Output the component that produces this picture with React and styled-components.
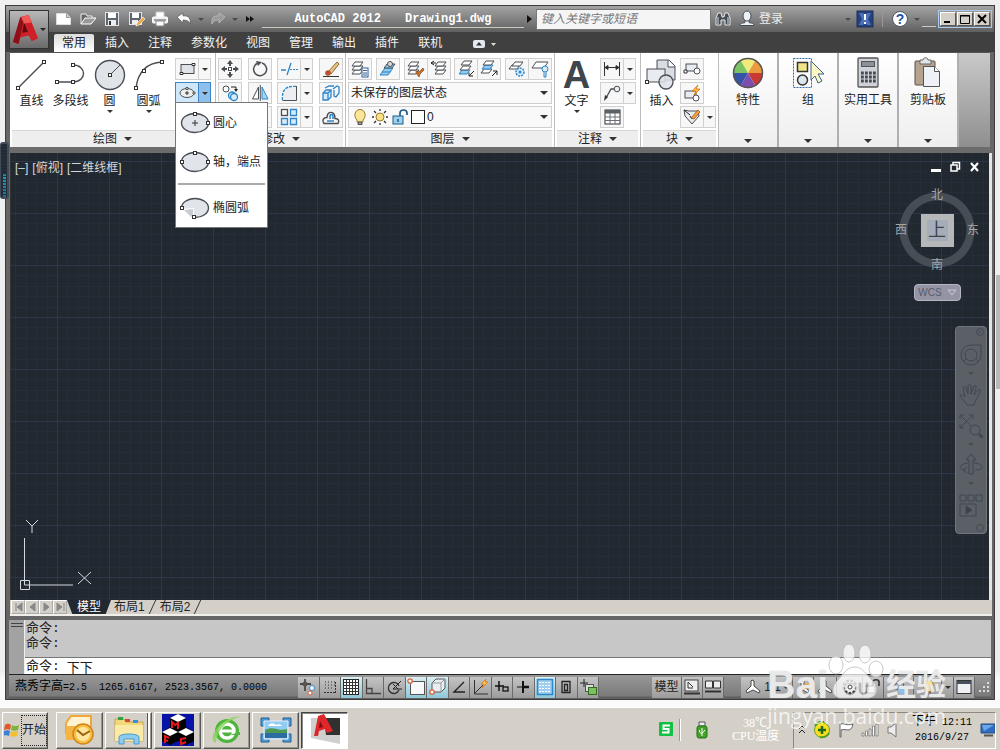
import { useState } from 'react';
import styled, { createGlobalStyle, css } from 'styled-components';

const line = '#4a4f55';
const blue = '#2f86c8';

const box = (x, y, key) => (
  <rect key={key} x={x - 1.5} y={y - 1.5} width="3" height="3" fill="#fff" stroke="#333" />
);

const sheet = (x, y, fill = '#fff', stroke = line) => (
  <path d={`M${x} ${y + 4}l3-4h8l-3 4z`} fill={fill} stroke={stroke} />
);

const sheets = (x = 1) => (
  <g>
    {sheet(x, 10)}
    {sheet(x, 6)}
    {sheet(x, 2)}
  </g>
);

const glyphs = {
  // quick access
  newFile: <><path d="M1.500 3.500h10l4 4v7h-14z" fill="#fff" stroke="#ddd" /><path d="M11.500 3.500v4h4" fill="#ccc" stroke="#999" /></>,
  open: <><path d="M2 14V4h5l1 2h5v3" fill="#666" stroke="#eee" /><path d="M2 14l4-6h11l-5 6z" fill="#999" stroke="#fff" /></>,
  save: <><rect x="2.500" y="2.500" width="13" height="13" fill="#5c6670" stroke="#dfe5ea" /><rect x="5" y="3" width="8" height="5" fill="#fff" /><rect x="5" y="10" width="8" height="5" fill="#eee" /><path d="M6 11h2v4H6z" fill="#333" /></>,
  saveAs: <><rect x="2.500" y="2.500" width="12" height="12" fill="#5c6670" stroke="#dfe5ea" /><rect x="5" y="3" width="7" height="5" fill="#fff" /><rect x="5" y="10" width="6" height="4" fill="#eee" /><path d="M9 16l1-3 6-6 2 2-6 6z" fill="#f0a63c" stroke="#fff" strokeWidth=".6" /></>,
  print: <><path d="M5 7V2h8v5" fill="#fff" stroke="#ccc" /><rect x="1.500" y="7" width="15" height="6" rx="1" fill="#eee" stroke="#fff" /><path d="M3 10h12" stroke="#555" /><path d="M5 11h8v5H5z" fill="#fff" stroke="#888" /></>,
  undo: <path d="M2 7l6-4v3c6-1 8 3 7 8-1-3-3-4-7-4v3z" fill="#fff" stroke="#555" strokeWidth=".7" />,
  redo: <path d="M16 7l-6-4v3c-6-1-8 3-7 8 1-3 3-4 7-4v3z" fill="#9b9b9b" stroke="#c2c2c2" strokeWidth=".7" />,
  binoculars: <><path d="M2 15V8l2-5h3l1 4h2l1-4h3l2 5v7h-5v-5H7v5z" fill="#454d57" stroke="#e8e8e8" /><path d="M4 7v7M14 7v7" stroke="#dde" /></>,
  user: <><path d="M2 15.500c0-3 3-2 5-3v-3h4v3c2 1 5 0 5 3z" fill="#eef1f5" stroke="#454d57" /><ellipse cx="9" cy="6" rx="4" ry="5" fill="#eef1f5" stroke="#454d57" /></>,
  exchange: <><rect x="1" y="1" width="16" height="16" fill="#24427f" stroke="#1f2f52" /><path d="M3 3h4l2 3 2-3h4l-3 6 3 6h-4l-2-3-2 3H3l3-6z" fill="#4c70b6" /><path d="M9 4v6M9 12v2" stroke="#fff" strokeWidth="2" /></>,
  // draw panel, 34x34
  line: <><path d="M3 30L29 4" stroke={line} strokeWidth="1.400" />{box(3, 30)}{box(29, 4)}</>,
  polyline: <><path d="M3 24h16c14 0 14-17 0-17" fill="none" stroke={line} strokeWidth="1.400" />{box(3, 24)}{box(19, 24)}{box(19, 7)}</>,
  circle: <><circle cx="17" cy="17" r="14.500" fill="#e0e3e8" stroke={line} strokeWidth="1.400" /><path d="M17 17L27 7" stroke={line} />{box(17, 17)}</>,
  arc: <><path d="M4 30C6 14 14 5 30 4" fill="none" stroke={line} strokeWidth="1.400" />{box(4, 30)}{box(12, 13)}{box(30, 4)}</>,
  rect: <><rect x="3" y="4.500" width="13" height="9" fill="#dfe3e8" stroke={line} /><path d="M2 12.500h3v2H2zM14 3.500h3v2h-3z" fill="#fff" stroke="#333" /></>,
  ellipse: <><ellipse cx="9" cy="9" rx="7" ry="4.500" fill="#eee" stroke={line} /><path d="M9 7v4M7 9h4" stroke="#333" /><path d="M8 3.500h2v2H8zM15 8h2v2h-2z" fill="#fff" stroke="#333" strokeWidth=".8" /></>,
  // modify panel
  move: <><path d="M9 1v5M9 12v5M1 9h5M12 9h5" stroke={line} strokeWidth="2" /><path d="M6 4l3-4 3 4zM6 14l3 4 3-4zM4 6L0 9l4 3zM14 6l4 3-4 3z" fill={line} /><rect x="7.500" y="7.500" width="3" height="3" fill="#fff" stroke={line} /></>,
  rotate: <><path d="M6 3.500A6.500 6.500 0 1 0 11 3" fill="none" stroke={line} strokeWidth="1.500" /><path d="M5 1l6 1-4 4z" fill={line} /></>,
  trim: <><path d="M1 10h5M11 3l-4 12" stroke={blue} strokeWidth="1.300" /><path d="M10 9.500h8" stroke={blue} strokeDasharray="2 1" /></>,
  erase: <><path d="M6 12L15 2l2 2L9 14z" fill="#e5c485" stroke="#8d6a35" /><circle cx="6" cy="13" r="2.800" fill="#b9502d" /><path d="M1 16.500h16" stroke="#333" /></>,
  copy: <><circle cx="5" cy="5" r="3" fill="#fff" stroke={line} /><circle cx="11" cy="11.500" r="3.500" fill="#d7ecfa" stroke={blue} strokeWidth="1.300" /><circle cx="13" cy="13" r="3.500" fill="#d7ecfa" stroke={blue} strokeWidth="1.300" /><path d="M10 3h5v3" fill="none" stroke="#222" /><path d="M13 5h4l-2 3z" fill="#222" /></>,
  mirror: <><path d="M7.500 3v12H1.500z" fill="#fff" stroke={line} /><path d="M11 3v12h6z" fill="#a9d4f2" stroke={blue} /><path d="M9.300 1v16" stroke={line} /></>,
  fillet: <><path d="M2.500 16V13C2.500 6 6 2.500 13 2.500h3" fill="none" stroke={blue} strokeWidth="1.500" strokeDasharray="3 1" /><path d="M2.500 16.500h14V2" fill="none" stroke={line} /><path d="M3 16C3 7 7 3 16 3v13z" fill="#eceef1" /></>,
  explode: <><path d="M1 9l3-3h5v7l-3 3H1z" fill="#d7ecfa" stroke={blue} strokeWidth="1.300" /><path d="M1 9h5v7M6 9l3-3M11 5l4-3 2 1v6l-3 4-2-1V6M3 4l4-2h5" fill="none" stroke={blue} strokeWidth="1.300" /></>,
  array: <><rect x="1.500" y="1.500" width="6" height="6" fill="none" stroke={line} strokeWidth="1.300" /><path d="M10.500 1.500h6v6h-6zM1.500 10.500h6v6h-6zM10.500 10.500h6v6h-6z" fill="#d7ecfa" stroke={blue} strokeWidth="1.300" /></>,
  offset: <><path d="M2 15.500h14c2-4-1-5-3-5 0-8-8-8-8-1-4 0-5 3-3 6z" fill="none" stroke={line} strokeWidth="1.400" /><path d="M5 13h7M8 11V8c0-2 3-2 3 0v3" fill="none" stroke={blue} strokeWidth="1.600" /></>,
  // layer panel
  layerProps: <>{sheets(1)}<rect x="11" y="8" width="6" height="9" fill="#fff" stroke="#345f95" /><path d="M12 10.500h4M12 13h4M12 15h4" stroke="#345f95" /></>,
  layerCurrent: <>{sheet(1, 11, '#8fcaf0', blue)}{sheet(3, 8, '#8fcaf0', blue)}{sheet(5, 4, '#8fcaf0', line)}<circle cx="11" cy="4" r="2.500" fill="#ddd" stroke={line} /></>,
  layerMatch: <>{sheets(1)}<path d="M9 11l3 1 4-4 1 2-4 4-1 3-3-4z" fill="#c5712b" stroke="#8b4a1b" strokeWidth=".7" /></>,
  layerPrev: <>{sheets(5)}<path d="M1 3h5M1 3l3-2M1 3l3 2" stroke="#222" fill="none" /></>,
  isolate: <>{sheet(2, 10, '#8fcaf0', blue)}{sheet(3, 6)}{sheet(4, 1)}<path d="M17 11l-5 5M12 12.500V16h4" fill="none" stroke="#222" /></>,
  unisolate: <>{sheet(1, 9)}{sheet(2, 5, '#8fcaf0', blue)}{sheet(3, 1)}<path d="M12 16l5-5M13 11h4v4" fill="none" stroke="#222" /></>,
  freeze: <>{sheet(1, 5)}{sheet(4, 2)}<circle cx="12" cy="12" r="4" fill="#d7ecfa" stroke={blue} strokeWidth="1.500" strokeDasharray="2 1" /><circle cx="12" cy="12" r="1.500" fill={blue} /></>,
  layerOff: <><path d="M1 8l4-6h12l-4 6z" fill="#fff" stroke={line} /><circle cx="14" cy="9" r="3" fill="#d7ecfa" stroke={blue} /><path d="M13 12v5h2v-5" fill="#d7ecfa" stroke={blue} /></>,
  bulb: <><path d="M6 12C2 8 4 1.500 9 1.500S16 8 12 12v2H6z" fill="#fbe596" stroke="#9a7b32" /><path d="M7 14h4v2.500H7z" fill="#999" stroke="#555" /></>,
  sun: <><circle cx="9" cy="9" r="4" fill="#fbdf83" stroke="#9a7b32" /><path d="M9 1v2M9 15v2M1 9h2M15 9h2M3 3l2 2M13 13l2 2M15 3l-2 2M5 13l-2 2" stroke="#333" strokeWidth="1.300" /></>,
  unlock: <><rect x="2" y="8" width="10" height="8" fill="#9bd0ef" stroke="#1f5d87" /><path d="M9 8V5c0-4 7-4 7 0v2" fill="none" stroke="#1f5d87" strokeWidth="1.700" /><path d="M7 11v3" stroke="#1f5d87" strokeWidth="1.500" /></>,
  // annotation and block
  dimension: <path d="M1.500 2v14M16.500 2v14M2 7.500h14M2 7.500l3-2v4zM16 7.500l-3-2v4z" fill="#333" stroke="#333" />,
  leader: <><circle cx="14" cy="5" r="2.800" fill="#eee" stroke={line} /><path d="M11 5H8L3 14" fill="none" stroke={line} strokeWidth="1.300" /><path d="M1 17l1-6 3 2z" fill="#333" /></>,
  table: <><rect x="2" y="2" width="15" height="14" fill="#fff" stroke="#333" /><path d="M2 2h15v3.500H2z" fill="#5b6066" /><path d="M2 9h15M2 12.500h15M7 5v11M12 5v11" stroke="#6b7076" /></>,
  insertBlock: <><path d="M12 8V2h12l6 6v14H12z" fill="#d9dde3" stroke={line} /><path d="M23 2v7h7" fill="#fff" stroke={line} /><rect x="2" y="11" width="18" height="13" fill="#e8ebef" stroke={line} />{box(2, 24)}<circle cx="21" cy="24" r="7" fill="#dde1e7" fillOpacity=".85" stroke={line} strokeWidth="1.300" /></>,
  createBlock: <><rect x="3" y="4" width="11" height="7" fill="#e8ebef" stroke={line} /><circle cx="14" cy="11" r="3" fill="#fff" stroke={line} /><path d="M1 10h3v3H1z" fill="#fff" stroke="#333" /></>,
  editBlock: <><rect x="2" y="7" width="11" height="7" fill="#e8ebef" stroke={line} /><circle cx="13" cy="14" r="3" fill="#fff" stroke={line} /><path d="M15 1l-6 6h4l-2 4 6-6h-4z" fill="#ffc247" stroke="#d4750e" strokeWidth=".8" /></>,
  editAttr: <><path d="M1 2l5 1h9l1 5-7 8-7-8z" fill="#e8ebef" stroke={line} /><path d="M1 2l6 5M7 8l2 3" stroke="#222" /><path d="M8 10l7-8 2 2-6 7z" fill="#f0a63c" stroke="#9f4d12" strokeWidth=".8" /></>,
  // tall panels, 32x32
  wheel: <><path d="M16 16L8.500 3A15 15 0 0 1 23.500 3z" fill="#f1ea7c" /><path d="M16 16L23.500 3A15 15 0 0 1 31 16z" fill="#e89c3d" /><path d="M16 16H31A15 15 0 0 1 23.500 29z" fill="#c93a35" /><path d="M16 16L23.500 29A15 15 0 0 1 8.500 29z" fill="#7c4fae" /><path d="M16 16L8.500 29A15 15 0 0 1 1 16z" fill="#3554a5" /><path d="M16 16H1A15 15 0 0 1 8.500 3z" fill="#7bc462" /><circle cx="16" cy="16" r="14.500" fill="none" stroke="#555" strokeWidth="1.500" /></>,
  group: <><rect x="1.500" y="1.500" width="18" height="29" fill="none" stroke="#2b6cb0" strokeDasharray="2 1" /><rect x="5.500" y="5.500" width="10" height="9" fill="#f0e689" stroke="#333" strokeWidth="1.500" /><circle cx="10.500" cy="23" r="5" fill="#dbe7ee" stroke="#333" strokeWidth="1.500" /><path d="M19 4v19l4-4 3 7 4-2-4-7h6z" fill="#fbf8c6" stroke="#3b6183" /></>,
  calculator: <><rect x="6" y="1" width="20" height="29" rx="1" fill="#cfd3d9" stroke="#555" strokeWidth="1.300" /><rect x="9.500" y="4.500" width="13" height="5" fill="#8b9199" stroke="#555" />{[16, 20, 24].map(y => <path key={y} d={`M9 ${y}h15`} stroke="#454a50" strokeWidth="3" strokeDasharray="2.800 1.200" />)}</>,
  clipboard: <><rect x="3" y="4" width="20" height="24" rx="1" fill="#b5a28f" stroke="#5d5045" /><path d="M8 7V3h3c0-3 5-3 5 0h3v4z" fill="#e4e4e4" stroke="#666" /><path d="M11.500 9.500h11l5 5v15h-16z" fill="#eef1f6" stroke="#555" /><path d="M22.500 9.500v5h5" fill="#fff" stroke="#555" /></>,
  // status bar
  infer: <><path d="M6 1v12M1 6h11" stroke="#222" strokeWidth="1.300" /><circle cx="6" cy="6" r="2.500" fill="#555" /><circle cx="13" cy="10" r="2.500" fill="#fff" stroke={blue} /><circle cx="11" cy="15" r="2" fill="#fff" stroke="#d9603b" /></>,
  snap: <><path d="M4 4h10M4 7h10M4 10h8" stroke="#333" strokeDasharray="1 2" /><path d="M3 14.500h12M14.500 4v11" stroke="#333" strokeDasharray="2 1" /></>,
  grid: <><rect x="1.500" y="1.500" width="15" height="15" fill="#fff" stroke="#222" /><path d="M4.500 1v16M7.500 1v16M10.500 1v16M13.500 1v16M1 4.500h16M1 7.500h16M1 10.500h16M1 13.500h16" stroke="#333" /></>,
  ortho: <path d="M2.500 1v14.500H17M3 10.500h5v5" fill="none" stroke="#444" strokeWidth="1.300" />,
  polar: <><path d="M14 8a5.500 5.500 0 1 0 0 4" fill="none" stroke="#333" strokeWidth="1.300" /><path d="M8 11h9M8 11l8-8M8 6l5 5" stroke="#222" /></>,
  osnap: <><rect x="3.500" y="3.500" width="14" height="13" fill="#f6f8fa" stroke="#555" /><circle cx="3" cy="3" r="2.200" fill="#fff" stroke="#d9603b" strokeWidth="1.300" /></>,
  osnap3d: <><path d="M4 5l4-4h9v9l-4 4H4z" fill="#e8edf2" stroke="#555" /><path d="M4 5h9v9M13 5l4-4" stroke="#999" fill="none" /><circle cx="4" cy="14" r="2.200" fill="#fff" stroke="#d9603b" strokeWidth="1.300" /></>,
  track: <path d="M14 4L4 14h11" fill="none" stroke="#222" strokeWidth="1.400" />,
  ducs: <><path d="M3.500 2v14H17M4 15l8-8" fill="none" stroke="#333" /><path d="M15 1l-5 5h3l-2 4 6-6h-3z" fill="#ffc247" stroke="#d4750e" strokeWidth=".7" /></>,
  dyn: <><path d="M6 3v10M2 8h9" stroke="#111" strokeWidth="1.500" /><rect x="10" y="9" width="5" height="4" fill="none" stroke="#111" strokeWidth="1.300" /></>,
  weight: <><path d="M9 3v12" stroke="#111" strokeWidth="2" /><path d="M3 9h6" stroke="#111" /><path d="M9 9h6" stroke="#111" strokeWidth="2.500" /></>,
  transparency: <><rect x="1.500" y="1.500" width="15" height="15" fill="#9fd0f2" stroke={blue} strokeWidth="1.500" /><path d="M3 4.500h12M3 7.500h12M3 10.500h12M3 13.500h12" stroke="#fff" strokeDasharray="2 1" /></>,
  quickProps: <path d="M5 3.500h8v11H5zM7.500 6.500h3v6h-3z" fill="none" stroke="#222" strokeWidth="1.300" />,
  cycling: <><path d="M5 1v8M1 5h8" stroke="#222" /><rect x="6.500" y="6.500" width="8" height="7" fill="#ddd" stroke="#555" /><rect x="9.500" y="9.500" width="8" height="7" fill="#7cc061" stroke="#2f6b1c" /></>,
  modelSpace: <><rect x="2" y="2" width="13" height="11" fill="#eee" stroke="#444" /><path d="M5 4l5 5M5 4v6h5" stroke="#333" fill="none" /><path d="M1 15.500h16" stroke="#333" strokeWidth="2" /></>,
  layouts: <><path d="M1.500 3h7v7h-7zM9.500 3h7v7h-7z" fill="#eee" stroke="#333" /><path d="M1 13.500h16" stroke="#333" strokeWidth="2" /></>,
  annoScale: <path d="M8 2l2 1v5l6 5-1 2-6-3-6 3-1-2 5-5V3z" fill="#fff" stroke="#444" />,
  annoVis: <><path d="M8 2l2 1v5l5 5-1 2-5-3-5 3-1-2 4-5V3z" fill="#eee" stroke="#555" /><circle cx="13" cy="8" r="3" fill="#f4a93a" /></>,
  gear: <><circle cx="9" cy="9" r="6" fill="#eee" stroke="#444" strokeWidth="3" strokeDasharray="2.500 1.500" /><circle cx="9" cy="9" r="5" fill="#eee" /><circle cx="9" cy="9" r="2" fill="#fff" stroke="#444" /></>,
  lock: <><rect x="2" y="8" width="9" height="7" fill="#ddd" stroke="#333" /><path d="M9 8V4c0-3 6-3 6 0v4" fill="none" stroke="#333" strokeWidth="1.600" /></>,
  hardware: <><path d="M2 10l6-7 6 3-2 6z" fill="#8e9aae" stroke="#444" /><circle cx="12" cy="12" r="4" fill="#8cc1ee" /></>,
  cleanScreen: <><rect x="2" y="2.500" width="14" height="13" fill="#eef0f3" stroke="#333" /><path d="M2 4.500h14" stroke="#46505c" strokeWidth="3" /></>,
  // navigation bar, 24x24
  steering: <><path d="M2 12A10 10 0 0 1 12 2h10v10a10 10 0 0 1-20 0z" /><circle cx="12" cy="12" r="6" /><path d="M7 16l-3 3M17 16l3 3" /></>,
  pan: <path d="M8 22C5 18 3 15 1 13c0-2 3-2 5 1L4 5c0-2 3-2 3 0l2 6V3c0-2 3-2 3 0v8l3-8c1-1 3 0 2 2l-2 7 4-5c2-1 3 0 2 2l-4 8-2 5z" />,
  zoom: <><path d="M1 1l13 13M14 1L1 14M1 5V1h4M10 1h4v4M1 10v4h4" /><circle cx="16" cy="16" r="5" fill="#5b6067" /><path d="M20 20l4 4" strokeWidth="2.500" /></>,
  orbit: <><path d="M10 21V7H7l5-6 5 6h-3v14z" /><path d="M9 10C-1 11-1 17 7 17M15 10c11 1 11 7 1 7M8 14l-4 3 4 3" /></>,
  motion: <><path d="M1 2h6v6H1zM9 2h6v6H9zM17 2h6v6h-6zM1 11h16v12H1z" /><path d="M7 13l6 4-6 4z" fill="#3c434b" /></>,
};

const Icon = ({ name, size = 18, box: view = 18 }) => (
  <svg width={size} height={size} viewBox={`0 0 ${view} ${view}`} fill="none" aria-hidden="true">
    {glyphs[name]}
  </svg>
);

const EllipseIcon = ({ kind }) => (
  <svg width="32" height="24" viewBox="0 0 32 24" aria-hidden="true">
    <ellipse cx="15" cy="12" rx="13.500" ry="9.500" fill="#e1e4ea" stroke={line} strokeWidth="1.400" />
    {kind === 'center' && <><path d="M15 9v6M12 12h6" stroke="#333" />{box(15, 3)}{box(28, 12)}</>}
    {kind === 'axis' && <>{box(15, 3)}{box(2, 12)}{box(28, 12)}</>}
    {kind === 'arc' && <><path d="M0 13l14-1v12H0z" fill="#fff" /><path d="M4 14l9-1v6l-2 2z" fill="#c9ccd0" />{box(2, 12)}{box(14, 21)}</>}
  </svg>
);

const Logo = () => (
  <svg width="27" height="32" viewBox="3 0 29 34" aria-hidden="true">
    <path d="M4 30L12 3l9-2 10 25-7 3-3-6-9 2-2 7z" fill="#cf1f26" />
    <path d="M4 30L12 3l3 6-5 23z" fill="#8c1016" />
    <path d="M16 9l-2 11 6-1z" fill="#5b0c10" />
    <path d="M13 3l8-2 3 8-8 1z" fill="#ef5a57" />
  </svg>
);

const quickAccess = ['newFile', 'open', 'save', 'saveAs', 'print', 'undo'];
const tabs = ['常用', '插入', '注释', '参数化', '视图', '管理', '输出', '插件', '联机'];
const drawTools = [
  { icon: 'line', label: '直线' },
  { icon: 'polyline', label: '多段线' },
  { icon: 'circle', label: '圆', more: true },
  { icon: 'arc', label: '圆弧', more: true },
];
const modifyRows = [
  [['move'], ['rotate'], ['trim', true], ['erase']],
  [['copy'], ['mirror'], ['fillet', true], ['explode']],
  [['rect'], ['mirror'], ['array', true], ['offset']],
];
const layerGroups = [['layerProps'], ['layerCurrent'], ['layerMatch', 'layerPrev'], ['isolate', 'unisolate'], ['freeze', 'layerOff']];
const tallPanels = [
  { icon: 'wheel', label: '特性' },
  { icon: 'group', label: '组' },
  { icon: 'calculator', label: '实用工具' },
  { icon: 'clipboard', label: '剪贴板' },
];
const toggles = ['infer', 'snap', 'grid', 'ortho', 'polar', 'osnap', 'osnap3d', 'track', 'ducs', 'dyn', 'weight', 'transparency', 'quickProps', 'cycling'];

const App = () => {
  const [tab, setTab] = useState('常用');
  const [menuOpen, setMenuOpen] = useState(true);
  const [active, setActive] = useState(['grid', 'osnap', 'osnap3d', 'transparency']);
  const [command, setCommand] = useState('下下');

  const toggle = (name) => {
    setActive(active.includes(name) ? active.filter(n => n !== name) : [...active, name]);
  };

  return (
    <Page>
      <GlobalStyle />
      <Desktop>
        <SideHandle />
        <Window>
          <Header>
            <AppButton aria-label="AutoCAD"><Logo /><Caret $light /></AppButton>
            <HeaderMain>
              <TitleBar>
                {quickAccess.map(name => <QuickButton key={name} aria-label={name}><Icon name={name} /></QuickButton>)}
                <CaretButton aria-label="undo list"><Caret /></CaretButton>
                <QuickButton aria-label="redo"><Icon name="redo" /></QuickButton>
                <CaretButton aria-label="redo list"><Caret /></CaretButton>
                <MoreButton aria-label="more"><Arrow $small /><Arrow $small /></MoreButton>
                <Title><span>AutoCAD 2012</span><span>Drawing1.dwg</span></Title>
                <Arrow />
                <Search aria-label="搜索" placeholder="键入关键字或短语" />
                <QuickButton aria-label="search"><Icon name="binoculars" /></QuickButton>
                <Login><Icon name="user" />登录</Login>
                <Spacer />
                <CaretButton aria-label="login list"><Caret /></CaretButton>
                <QuickButton aria-label="exchange"><Icon name="exchange" /></QuickButton>
                <Divider />
                <HelpButton>?</HelpButton>
                <CaretButton aria-label="help list"><Caret /></CaretButton>
                <Underline />
                <WindowButtons>
                  <button aria-label="minimize"><svg width="14" height="12"><path d="M3 9h6" stroke="#000" strokeWidth="2" /></svg></button>
                  <button aria-label="restore"><svg width="14" height="12"><path d="M2.500 2.500h9v8h-9zM2 3h10" fill="none" stroke="#000" /></svg></button>
                  <button aria-label="close"><svg width="14" height="12"><path d="M3 2l8 8M11 2l-8 8" stroke="#000" strokeWidth="2" /></svg></button>
                </WindowButtons>
              </TitleBar>
              <TabBar>
                {tabs.map(name => (
                  <Tab key={name} $active={name === tab} onClick={() => setTab(name)}>{name}</Tab>
                ))}
                <RibbonToggle aria-label="ribbon">
                  <svg width="26" height="10"><rect x="1" y="1" width="12" height="8" rx="2" fill="#e4e8f0" /><path d="M4 6.500L7 3l3 3.500z" fill="#333" /><path d="M19 4h5l-2.500 3z" fill="#ddd" /></svg>
                </RibbonToggle>
              </TabBar>
            </HeaderMain>
          </Header>

          <Ribbon>
            <Panel $width={206}>
              <Tools $wide>
                <BigTools>
                  {drawTools.map(t => (
                    <BigButton key={t.label}>
                      <Icon name={t.icon} size={34} box={34} />
                      <span>{t.label}</span>
                      {t.more && <Caret $dark />}
                    </BigButton>
                  ))}
                </BigTools>
                <Stack>
                  <Split><button aria-label="矩形"><Icon name="rect" /></button><button aria-label="更多"><Caret $dark /></button></Split>
                  <MenuAnchor>
                    <Split $active={menuOpen}>
                      <button aria-label="椭圆"><Icon name="ellipse" /></button>
                      <button aria-label="椭圆菜单" onClick={() => setMenuOpen(!menuOpen)}><Caret $dark /></button>
                    </Split>
                    {menuOpen && (
                      <Menu>
                        <MenuItem><EllipseIcon kind="center" />圆心</MenuItem>
                        <MenuItem><EllipseIcon kind="axis" />轴，端点</MenuItem>
                        <MenuLine />
                        <MenuItem><EllipseIcon kind="arc" />椭圆弧</MenuItem>
                      </Menu>
                    )}
                  </MenuAnchor>
                </Stack>
              </Tools>
              <PanelTitle>绘图<Caret $dark $big /></PanelTitle>
            </Panel>

            <Panel $width={130}>
              <Tools>
                <Stack $full>
                  {modifyRows.map((row, i) => (
                    <ToolRow key={i}>
                      {row.map(([name, more], j) => (
                        <Split key={j}>
                          <button aria-label={name}><Icon name={name} /></button>
                          {more && <button aria-label="更多"><Caret $dark /></button>}
                        </Split>
                      ))}
                    </ToolRow>
                  ))}
                </Stack>
              </Tools>
              <PanelTitle>修改<Caret $dark $big /></PanelTitle>
            </Panel>

            <Panel $width={209}>
              <Tools>
                <Stack $full>
                  <ToolRow>
                    {layerGroups.map(group => (
                      <Split key={group[0]} $wide>
                        {group.map(name => <button key={name} aria-label={name}><Icon name={name} /></button>)}
                      </Split>
                    ))}
                  </ToolRow>
                  <Combo>
                    <select aria-label="图层状态"><option>未保存的图层状态</option></select>
                    <Caret $dark $big />
                  </Combo>
                  <Combo>
                    <Icon name="bulb" /><Icon name="sun" /><Icon name="unlock" /><Swatch />
                    <select aria-label="图层"><option>0</option></select>
                    <Caret $dark $big />
                  </Combo>
                </Stack>
              </Tools>
              <PanelTitle>图层<Caret $dark $big /></PanelTitle>
            </Panel>

            <Panel $width={86}>
              <Tools $wide>
                <BigButton><LetterA>A</LetterA><span>文字</span><Caret $dark /></BigButton>
                <Stack>
                  <Split><button aria-label="标注"><Icon name="dimension" /></button><button aria-label="更多"><Caret $dark /></button></Split>
                  <Split><button aria-label="引线"><Icon name="leader" /></button><button aria-label="更多"><Caret $dark /></button></Split>
                  <Split><button aria-label="表格"><Icon name="table" /></button></Split>
                </Stack>
              </Tools>
              <PanelTitle>注释<Caret $dark $big /></PanelTitle>
            </Panel>

            <Panel $width={78}>
              <Tools>
                <BigButton><Icon name="insertBlock" size={34} box={34} /><span>插入</span></BigButton>
                <Stack>
                  <Split><button aria-label="创建"><Icon name="createBlock" /></button></Split>
                  <Split><button aria-label="编辑"><Icon name="editBlock" /></button></Split>
                  <Split><button aria-label="编辑属性"><Icon name="editAttr" /></button><button aria-label="更多"><Caret $dark /></button></Split>
                </Stack>
              </Tools>
              <PanelTitle>块<Caret $dark $big /></PanelTitle>
            </Panel>

            {tallPanels.map(p => (
              <TallPanel key={p.label}>
                <Icon name={p.icon} size={32} box={32} />
                <span>{p.label}</span>
                <Caret $dark $big />
              </TallPanel>
            ))}
          </Ribbon>

          <Canvas>
            <CanvasTop>
              <ViewLabels>
                <span>[–]</span>
                <span>[俯视]</span>
                <span>[二维线框]</span>
              </ViewLabels>
              <svg width="52" height="12" stroke="#fff" fill="none" aria-hidden="true">
                <path d="M0 9.500h10" strokeWidth="3" /><path d="M20 4h6v6h-6zM22 4V1.500h6.500V8H26" strokeWidth="1.500" /><path d="M40 2l7 8M47 2l-7 8" strokeWidth="2.200" />
              </svg>
            </CanvasTop>
            <ViewCube>
              <span>北</span>
              <CubeMiddle><span>西</span><CubeFace>上</CubeFace><span>东</span></CubeMiddle>
              <span>南</span>
            </ViewCube>
            <Wcs>WCS<svg width="10" height="8"><path d="M1 1h8L5 6z" fill="none" stroke="#c8c8d4" /></svg></Wcs>
            <NavBar>
              <NavDot>×</NavDot>
              {['steering', 'pan', 'zoom', 'orbit', 'motion'].map(name => (
                <NavButton key={name} aria-label={name}>
                  <Icon name={name} size={24} box={24} />
                  {name !== 'pan' && name !== 'motion' && <Caret />}
                </NavButton>
              ))}
              <NavDot />
            </NavBar>
            <Ucs width="76" height="76" viewBox="0 0 76 76" fill="none" stroke="#d5d8dc" aria-hidden="true">
              <path d="M6.500 20v47H55M2.500 62.500h9v9h-9zM8 2l6 6 6-6M14 8v7M60 54l13 12M73 54L60 66" />
            </Ucs>
          </Canvas>

          <LayoutBar>
            {['M4 2v8M10 2L5 6l5 4z', 'M9 2L4 6l5 4z', 'M4 2l5 4-5 4z', 'M3 2l5 4-5 4zM10 2v8'].map(d => (
              <LayoutNav key={d} aria-label="layout"><svg width="12" height="12"><path d={d} fill="#888" stroke="#888" /></svg></LayoutNav>
            ))}
            <LayoutTab $active>模型</LayoutTab>
            <LayoutTab>布局1</LayoutTab>
            <Slash />
            <LayoutTab>布局2</LayoutTab>
            <Slash />
          </LayoutBar>

          <Command>
            <Grip />
            <CommandMain>
              <History>命令:<br />命令:</History>
              <Prompt>
                <label htmlFor="command">命令:</label>
                <input id="command" value={command} onChange={e => setCommand(e.target.value)} />
              </Prompt>
            </CommandMain>
          </Command>

          <StatusBar>
            <Coords><b>燕秀字高</b>=2.5&nbsp;&nbsp;1265.6167, 2523.3567, 0.0000</Coords>
            <Toggles>
              {toggles.map(name => (
                <StatusButton key={name} aria-label={name} $active={active.includes(name)} onClick={() => toggle(name)}>
                  <Icon name={name} />
                </StatusButton>
              ))}
            </Toggles>
            <Spacer />
            <StatusButton $width={30}>模型</StatusButton>
            <StatusButton aria-label="模型空间"><Icon name="modelSpace" /></StatusButton>
            <StatusButton aria-label="布局"><Icon name="layouts" /></StatusButton>
            <StatusGap />
            <StatusButton $width={52}><Icon name="annoScale" />1:1<Caret $dark /></StatusButton>
            <StatusButton aria-label="注释可见性"><Icon name="annoVis" /></StatusButton>
            <StatusButton $width={23} aria-label="自动缩放"><Icon name="annoScale" /></StatusButton>
            <StatusButton $width={26} aria-label="工作空间"><Icon name="gear" /></StatusButton>
            <StatusButton aria-label="锁定"><Icon name="lock" /></StatusButton>
            <StatusButton $width={30} aria-label="硬件"><Icon name="hardware" /></StatusButton>
            <StatusButton $width={28} aria-label="隔离对象"><Icon name="bulb" /></StatusButton>
            <StatusButton $width={12} aria-label="更多"><Caret $dark /></StatusButton>
            <StatusButton aria-label="全屏"><Icon name="cleanScreen" /></StatusButton>
            <svg width="16" height="18" aria-hidden="true"><path d="M12 4h2v2h-2zM8 8h2v2H8zM12 8h2v2h-2zM4 12h2v2H4zM8 12h2v2H8zM12 12h2v2h-2z" fill="#ddd" /></svg>
          </StatusBar>
        </Window>
        <PageScroll />
      </Desktop>

      <Taskbar>
        <StartButton>
          <svg width="16" height="16" aria-hidden="true"><path d="M1 3c3-2 4-1 6 0L6 8C4 7 3 7 0 8z" fill="#e2582b" /><path d="M8 3c3 2 5 1 7 0l-1 5c-3 1-4 1-7 0z" fill="#7db53a" /><path d="M0 9c3-1 4-1 6 0l-1 5c-2-1-4-1-6 0z" fill="#3d7fd0" /><path d="M7 9c3 1 4 1 7 0l-1 5c-3 1-5 1-7 0z" fill="#f4bf2d" /></svg>
          <span>开始</span>
        </StartButton>
        <TaskButton aria-label="Outlook">
          <svg width="34" height="32" viewBox="0 0 34 32"><path d="M3 9l5-7h20v17H3z" fill="#fff3d0" stroke="#f0a63c" strokeWidth="2" /><path d="M3 12h14v14H3z" fill="#f5b544" /><circle cx="20" cy="20" r="10" fill="#f8c043" stroke="#cf8419" strokeWidth="1.500" /><circle cx="20" cy="20" r="7" fill="#ffe69c" /><path d="M14 16l6 5 7-4" fill="none" stroke="#9b6010" strokeWidth="2" /></svg>
        </TaskButton>
        <TaskButton $stacked aria-label="Explorer">
          <svg width="34" height="32" viewBox="0 0 34 32"><path d="M3 5h9l2 3h17v19H3z" fill="#f4d97c" stroke="#c5a54c" /><path d="M3 11h28v16H3z" fill="#fbeaa5" /><path d="M6 3h5v3H6z" fill="#31a046" /><path d="M13 5h5v3h-5z" fill="#d8493a" /><path d="M21 6h5v3h-5z" fill="#3b8fd8" /><path d="M7 30v-7c0-4 20-4 20 0v7h-5v-5H12v5z" fill="#8ecbf0" stroke="#4a9bd1" /></svg>
        </TaskButton>
        <TaskButton aria-label="MFC">
          <svg width="32" height="32" viewBox="0 0 32 32"><path d="M0 0h32v32H0z" fill="#0712a8" /><path d="M8 4l8-4 8 4v9l8 5v9l-8 4-8-4-8 4-8-4v-9l8-5z" fill="#000" /><path d="M8 4l8-4 8 4-8 4zM0 18l8-4 8 4-8 4zM16 18l8-4 8 4-8 4z" fill="#fff" /><path d="M10 14V8l3 3 3-2v6M3 29v-7l4 2M3 26l3 1M24 24l-5 1v5l5-2" fill="none" stroke="#e5181d" strokeWidth="2" /></svg>
        </TaskButton>
        <TaskButton aria-label="Browser">
          <svg width="34" height="32" viewBox="0 0 34 32"><circle cx="17" cy="17" r="12" fill="#4db53c" /><circle cx="17" cy="17" r="7" fill="none" stroke="#fff" strokeWidth="3.500" /><path d="M10 17h15" stroke="#fff" strokeWidth="3" /><path d="M20 21h10v-3z" fill="#4db53c" /><path d="M3 27C-1 17 20-1 31 3 21 4 7 14 6 29z" fill="#86d45d" fillOpacity=".8" /></svg>
        </TaskButton>
        <TaskButton aria-label="Pictures">
          <svg width="34" height="32" viewBox="0 0 34 32"><path d="M2 4h8v8H2zM24 4h8v8h-8zM2 20h8v8H2zM24 20h8v8h-8z" fill="#4c9bd6" stroke="#235f94" /><path d="M5 7h24v18H5z" fill="#8fcdf2" stroke="#eef" /><path d="M6 16c8-5 14 2 22-1v4H6z" fill="#4e9a52" /><path d="M6 19h22v5H6z" fill="#2c6ca0" /><path d="M9 12c2-4 6-3 8-1 3-2 6 0 6 1z" fill="#fff" /></svg>
        </TaskButton>
        <TaskButton $pressed aria-label="AutoCAD">
          <svg width="34" height="32" viewBox="0 0 34 32"><path d="M3 4h29v26H3z" fill="#cfcfcf" /><path d="M16 4h16v17H18z" fill="#303030" /><path d="M3 24l29 6H3z" fill="#fff" /><path d="M6 22L10 2l6-2 9 17-6 2-2-4-6 2-1 5z" fill="#df262b" /><path d="M12 7l-1 7 4-1z" fill="#7b0e12" /></svg>
        </TaskButton>
        <Spacer />
        <svg width="14" height="16" aria-hidden="true"><rect width="14" height="14" rx="1" fill="#12c043" /><path d="M11 3.500H4.500V7h5v3.500H3" fill="none" stroke="#fff" strokeWidth="2" /></svg>
        <TrayLine />
        <svg width="12" height="18" aria-hidden="true"><path d="M3 1h6v4H3z" fill="#eee" stroke="#555" /><rect x="1" y="5" width="10" height="12" rx="2" fill="#3fa527" stroke="#2b6b1a" /><path d="M6 15V7M3.500 9v2L6 13M8.500 9v1L6 12" stroke="#fff" fill="none" /></svg>
        <Temperature>38℃<br />CPU温度</Temperature>
        <Tray>
          <svg width="8" height="10" aria-hidden="true"><path d="M1 4l3-3 3 3M1 8l3-3 3 3" fill="none" stroke="#222" /></svg>
          <svg width="18" height="18" aria-hidden="true"><circle cx="9" cy="9" r="7.500" fill="#f7de1e" stroke="#67a523" /><path d="M2 5a8 8 0 0 1 9-4M16 12a8 8 0 0 1-9 4" stroke="#4c9d20" strokeWidth="2" fill="none" /><path d="M9 5v8M5 9h8" stroke="#1c6b1e" strokeWidth="2.500" /></svg>
          <svg width="16" height="16" aria-hidden="true"><path d="M2 15V1h1v1c4-1 5 2 12 0-1 3-1 5-4 6-3 0-5-1-8 0v7z" fill="#fff" stroke="#666" /></svg>
          <svg width="18" height="14" aria-hidden="true"><path d="M1 10h2v3H1zM4.500 8h2v5h-2zM8 6h2v7H8zM11.500 3h2v10h-2zM15 1h2v12h-2z" fill="#fff" stroke="#777" strokeWidth=".8" /></svg>
          <svg width="14" height="16" aria-hidden="true"><path d="M2 5h3l5-4v14l-5-4H2z" fill="#eee" stroke="#777" /></svg>
          <Clock><b>下午</b> 12:11<br />2016/9/27</Clock>
          <svg width="15" height="16" aria-hidden="true"><path d="M1 2h14v9H1z" fill="#2e6fc4" stroke="#244b80" /><path d="M2 3h12L4 9z" fill="#6ea6e6" /><path d="M4 13.500h9" stroke="#555" strokeWidth="2" /></svg>
        </Tray>
      </Taskbar>

      <Watermark aria-hidden="true">
        <Brand>
          <span>Bai</span>
          <svg width="58" height="60" viewBox="0 0 58 60">
            <g fill="#fff" fillOpacity=".75" stroke="#bbb" strokeWidth=".8">
              <ellipse cx="8" cy="22" rx="7" ry="9" /><ellipse cx="21" cy="10" rx="6" ry="9" /><ellipse cx="37" cy="11" rx="6" ry="9" /><ellipse cx="48" cy="26" rx="7" ry="8" />
              <path fillRule="evenodd" d="M27 24c8 0 11 8 18 14 7 8 3 17-5 17H13c-8 0-11-9-4-17 6-6 9-14 18-14zm-5 16a6 6 0 1 0 0 12 6 6 0 0 0 0-12zm9 0v7c0 6 9 6 9 0v-7h-2v7c0 4-5 4-5 0v-7z" />
            </g>
          </svg>
          <span>经验</span>
        </Brand>
        <Site>jingyan.baidu.com</Site>
      </Watermark>
    </Page>
  );
};

const GlobalStyle = createGlobalStyle`
  * {
    box-sizing: border-box;
  }

  body {
    margin: 0;
    background: #f0f0f0;
    font-family: "Liberation Sans", "Noto Sans CJK SC", sans-serif;
    font-size: 12px;
    line-height: 14px;
    color: #222;
  }

  button, input, select {
    font: inherit;
    color: inherit;
    margin: 0;
    padding: 0;
    border: 0;
    background: none;
    outline: none;
  }

  svg {
    display: block;
    flex: none;
  }
`;

const Page = styled.div`
  position: relative;
  min-height: 100vh;
  display: flex;
  flex-direction: column;
  overflow: hidden;
`;

const Desktop = styled.div`
  position: relative;
  flex: 1;
  display: flex;
  padding: 5px 5px 7px;
  background: linear-gradient(#f0f0f0, #ededed 670px, #fafafa 680px);
`;

const SideHandle = styled.div`
  position: absolute;
  left: 0;
  top: 142px;
  width: 9px;
  height: 57px;
  border: 2px solid #414c58;
  border-left-width: 1px;
  border-radius: 3px;
  background: repeating-linear-gradient(transparent 0 2px, #26313b 2px 3px), linear-gradient(90deg, #222b34 2px, transparent 2px 5px, #222b34 5px), linear-gradient(#222b34 55%, #25a0bb 60%, #1d6d8c);
  z-index: 3;
`;

const PageScroll = styled.div`
  position: absolute;
  right: 0;
  top: 275px;
  width: 4px;
  height: 114px;
  background: #b8b8b8;
`;

const Window = styled.div`
  flex: 1;
  min-width: 0;
  display: flex;
  flex-direction: column;
  border: 1px solid #3d3d3d;
  background: #666;
`;

const Header = styled.header`
  display: flex;
  height: 46px;
  padding-left: 3px;
  background: linear-gradient(#a3a3a3, #606060 26px, #404040 26px);
`;

const AppButton = styled.button`
  width: 40px;
  height: 39px;
  margin-top: 4px;
  padding-left: 2px;
  display: flex;
  align-items: center;
  gap: 1px;
  border: 1px solid #333;
  background: linear-gradient(#b8b8b8, #6b6b6b);
`;

const HeaderMain = styled.div`
  flex: 1;
  min-width: 0;
`;

const TitleBar = styled.div`
  display: flex;
  align-items: center;
  height: 26px;
  padding: 0 2px 0 3px;
`;

const QuickButton = styled.button`
  width: 24px;
  height: 24px;
  flex: none;
  display: flex;
  align-items: center;
  justify-content: center;
`;

const CaretButton = styled.button`
  width: 10px;
  height: 20px;
  flex: none;
  display: flex;
  align-items: center;
  justify-content: center;
`;

const Caret = styled.i`
  width: 0;
  height: 0;
  flex: none;
  border: solid transparent;
  border-width: ${props => (props.$big ? '4px 4px 0' : '3px 3px 0')};
  border-top-color: ${props => (props.$light ? '#222' : props.$dark ? '#333' : '#4a4a4a')};
`;

const MoreButton = styled.button`
  width: 20px;
  display: flex;
  justify-content: center;
`;

const Arrow = styled.i`
  width: 0;
  height: 0;
  flex: none;
  border: solid transparent;
  border-width: ${props => (props.$small ? '3px 0 3px 4px' : '4px 0 4px 5px')};
  border-left-color: #111;
`;

const Title = styled.h1`
  width: 262px;
  height: 18px;
  margin: 0 3px 0 2px;
  display: flex;
  justify-content: center;
  gap: 24px;
  border-bottom: 1px solid #c9c9c0;
  font: bold 12px/18px "Liberation Mono", monospace;
  color: #fff;
`;

const Search = styled.input`
  width: 175px;
  height: 21px;
  margin-left: 4px;
  padding: 0 4px;
  border: 1px solid #777;
  background: #f5f5f5;
  font-style: italic;

  &::placeholder {
    color: #777;
    opacity: 1;
  }
`;

const Login = styled.button`
  display: flex;
  align-items: center;
  gap: 3px;
  margin-left: 3px;
  color: #eee;
`;

const Spacer = styled.div`
  flex: 1;
`;

const Divider = styled.div`
  width: 1px;
  height: 16px;
  margin: 0 5px;
  background: #999;
`;

const HelpButton = styled.button`
  width: 16px;
  height: 16px;
  margin: 0 4px;
  border-radius: 50%;
  border: 1px solid #4a5566;
  background: #fff;
  color: #2451a6;
  font-weight: bold;
  font-size: 14px;
`;

const Underline = styled.div`
  width: 14px;
  height: 16px;
  border-bottom: 1px solid #c9c9c0;
  margin-right: 2px;
`;

const WindowButtons = styled.div`
  display: flex;
  gap: 1px;
  padding: 1px;
  border: 1px solid #a9cbed;

  button {
    width: 16px;
    height: 14px;
    background: #d4d0c8;
    border: 1px solid;
    border-color: #fff #555 #555 #fff;
  }
`;

const TabBar = styled.nav`
  display: flex;
  align-items: flex-end;
  gap: 3px;
  height: 20px;
  padding-left: 5px;
`;

const Tab = styled.button`
  height: 18px;
  padding: 0 8px;
  border-radius: 2px 2px 0 0;
  color: #f2f2f2;

  ${props => props.$active && css`
    background: linear-gradient(#dcdcdc, #fff);
    color: #222;
  `}
`;

const RibbonToggle = styled.button`
  height: 16px;
  margin-left: 19px;
`;

const Ribbon = styled.section`
  display: flex;
  height: 101px;
  margin: 0 4px;
  border-bottom: 6px solid #6c6c6c;
  background: linear-gradient(#c9c9c9, #8f8f8f);
  border-top: 1px solid #555;
`;

const Panel = styled.div`
  width: ${props => props.$width}px;
  flex: none;
  display: flex;
  flex-direction: column;
  background: #fff;
  border-right: 1px solid #bdbdbd;
`;

const Tools = styled.div`
  flex: 1;
  min-height: 0;
  display: flex;
  justify-content: space-between;
  padding: ${props => (props.$wide ? '5px 4px 0 2px' : '5px 2px 0')};
`;

const PanelTitle = styled.div`
  height: 17px;
  margin: 0 2px;
  display: flex;
  align-items: center;
  justify-content: center;
  gap: 7px;
  background: #eee;
  border-top: 1px solid #d6d6d6;
`;

const BigTools = styled.div`
  display: flex;
`;

const BigButton = styled.button`
  width: 39px;
  height: 60px;
  display: flex;
  flex-direction: column;
  align-items: center;
  white-space: nowrap;

  span {
    margin: 2px 0;
  }
`;

const LetterA = styled.b`
  height: 34px;
  font: bold 38px/34px "Liberation Sans", sans-serif;
  color: #41464c;
`;

const Stack = styled.div`
  display: flex;
  flex-direction: column;
  gap: 2px;
  flex: ${props => (props.$full ? '1' : 'none')};
  width: ${props => (props.$full ? 'auto' : '36px')};
`;

const ToolRow = styled.div`
  display: flex;
  justify-content: space-between;
`;

const Split = styled.div`
  display: flex;
  width: fit-content;
  height: 22px;
  border: 1px solid #d0d0d0;
  background: #f7f7f7;

  button {
    width: 22px;
    height: 20px;
    display: flex;
    align-items: center;
    justify-content: center;
  }

  button + button {
    width: ${props => (props.$wide ? '23px' : '12px')};
    border-left: 1px solid #d0d0d0;
  }

  ${props => props.$active && css`
    border-color: #3d85c9;
    background: #cfe8f9;

    button + button {
      border-color: #3d85c9;
      background: #8fc0ec;
    }
  `}
`;

const MenuAnchor = styled.div`
  position: relative;
`;

const Menu = styled.div`
  position: absolute;
  left: 0;
  top: 20px;
  width: 93px;
  border: 1px solid #777;
  background: #fff;
  z-index: 5;
`;

const MenuItem = styled.button`
  display: flex;
  align-items: center;
  gap: 1px;
  width: 100%;
  height: 39px;
  padding-left: 4px;
  white-space: nowrap;
`;

const MenuLine = styled.div`
  height: 2px;
  margin: 2px 2px 3px;
  background: #aaa;
`;

const Combo = styled.div`
  display: flex;
  align-items: center;
  gap: 2px;
  height: 22px;
  padding: 0 3px 0 2px;
  border: 1px solid #cfcfcf;
  background: #f9f9f9;

  select {
    flex: 1;
    min-width: 0;
    appearance: none;
  }
`;

const Swatch = styled.i`
  width: 14px;
  height: 14px;
  border: 1px solid #222;
  background: #fff;
`;

const TallPanel = styled.button`
  width: 60px;
  flex: none;
  display: flex;
  flex-direction: column;
  align-items: center;
  gap: 4px;
  padding: 4px 0;
  border-right: 2px solid #b0b0b0;
  background: linear-gradient(#fff, #eee);
  white-space: nowrap;

  i {
    margin-top: auto;
  }
`;

const Canvas = styled.main`
  position: relative;
  flex: 1;
  display: flex;
  flex-direction: column;
  align-items: flex-end;
  margin: 0 2px 0 4px;
  border-right: 3px solid #e4e4e4;
  border-left: 1px solid #333;
  background-color: #212830;
  background-image:
    linear-gradient(#2d374a 1px, transparent 1px),
    linear-gradient(90deg, #2d374a 1px, transparent 1px),
    linear-gradient(transparent 10px, #252d37 10px 11px, transparent 11px 21px, #252d37 21px 22px, transparent 22px 31px, #252d37 31px 32px, transparent 32px 42px, #252d37 42px 43px, transparent 43px),
    linear-gradient(90deg, transparent 10px, #252d37 10px 11px, transparent 11px 21px, #252d37 21px 22px, transparent 22px 31px, #252d37 31px 32px, transparent 32px 42px, #252d37 42px 43px, transparent 43px);
  background-size: 52px 52px;
  background-position: 46px 8px;
  color: #d3d7dc;
`;

const CanvasTop = styled.div`
  width: 100%;
  display: flex;
  justify-content: space-between;
  padding: 8px 6px 0 4px;
`;

const ViewLabels = styled.div`
  display: flex;
  gap: 4px;
`;

const ViewCube = styled.div`
  width: 84px;
  height: 84px;
  margin: 13px 10px 0 0;
  display: flex;
  flex-direction: column;
  align-items: center;
  justify-content: space-between;
  color: #a3a7ab;
  background: radial-gradient(circle, transparent 29px, #474d54 30px 37px, transparent 38px);
`;

const CubeMiddle = styled.div`
  width: 100%;
  display: flex;
  align-items: center;
  justify-content: space-between;
`;

const CubeFace = styled.div`
  width: 33px;
  height: 33px;
  display: flex;
  align-items: center;
  justify-content: center;
  border: 6px solid #b5b7b9;
  background: #a5adb8;
  color: #3f454c;
  font-size: 18px;
`;

const Wcs = styled.button`
  width: 47px;
  height: 17px;
  margin: 12px 28px 0 0;
  display: flex;
  align-items: center;
  justify-content: center;
  gap: 5px;
  border: 1px solid #b5b5c6;
  border-radius: 4px;
  background: #9594a5;
  color: #5b5b69;
  font-size: 10px;
`;

const NavBar = styled.div`
  width: 32px;
  height: 208px;
  margin: 25px 2px 0 0;
  padding: 1px 0;
  display: flex;
  flex-direction: column;
  align-items: center;
  justify-content: space-between;
  border: 1px solid #70757b;
  border-radius: 4px;
  background: #5b6067;
`;

const NavButton = styled.button`
  display: flex;
  flex-direction: column;
  align-items: center;
  gap: 5px;

  svg {
    stroke: #41474f;
  }
`;

const NavDot = styled.i`
  width: 8px;
  height: 8px;
  margin-right: 2px;
  align-self: flex-end;
  border: 1px solid #454b53;
  border-radius: 50%;
  font: 8px/6px "Liberation Sans", sans-serif;
  color: #454b53;
`;

const Ucs = styled.svg`
  position: absolute;
  left: 7px;
  bottom: 6px;
`;

const LayoutBar = styled.div`
  display: flex;
  height: 16px;
  margin: 0 2px 0 4px;
  padding-left: 1px;
  border-bottom: 2px solid #f1efe9;
  background: #d4d0c8;
`;

const LayoutNav = styled.button`
  width: 14px;
  height: 14px;
  border: 1px solid;
  border-color: #fff #aaa #aaa #fff;
`;

const LayoutTab = styled.button`
  padding: 0 3px;
  height: 14px;

  ${props => props.$active && css`
    width: 44px;
    padding: 0;
    background: #212830;
    color: #fff;
    clip-path: polygon(0 0, 100% 0, 88% 100%, 12% 100%);
  `}
`;

const Slash = styled.i`
  width: 1px;
  height: 14px;
  margin: 0 4px;
  background: #333;
  transform: skewX(-25deg);
`;

const Command = styled.div`
  display: flex;
  height: 54px;
  margin: 4px 3px 0;
`;

const Grip = styled.div`
  width: 16px;
  border-right: 1px solid #eee;
  background: repeating-linear-gradient(#444 0 1px, #a2a2a2 1px 3px) 2px 3px / 12px 4px no-repeat #a2a2a2;
`;

const CommandMain = styled.div`
  flex: 1;
  display: flex;
  flex-direction: column;
  font: 13px/15px "Liberation Mono", "Noto Sans CJK SC", monospace;
  color: #222;
`;

const History = styled.div`
  height: 38px;
  padding: 1px 0 0 1px;
  border-bottom: 1px solid #777;
  background: #c7c7c7;
`;

const Prompt = styled.div`
  flex: 1;
  display: flex;
  align-items: center;
  gap: 7px;
  padding-left: 1px;
  background: #fff;

  input {
    flex: 1;
    height: 16px;
  }
`;

const StatusBar = styled.footer`
  display: flex;
  align-items: center;
  height: 25px;
  margin: 0 3px;
  border-top: 1px solid #222;
  background: linear-gradient(#989898, #7a7a7a 21px, #606060 22px);
`;

const Coords = styled.div`
  width: 289px;
  padding-left: 6px;
  font: 10px/14px "Liberation Mono", "Noto Sans CJK SC", monospace;
  color: #000;
  white-space: nowrap;

  b {
    font-weight: normal;
    font-size: 12px;
  }
`;

const Toggles = styled.div`
  width: 301px;
  display: grid;
  grid-template-columns: repeat(14, 1fr);
`;

const StatusButton = styled.button`
  width: ${props => (props.$width ? `${props.$width}px` : 'auto')};
  min-width: ${props => (props.$width ? '0' : '21px')};
  height: 21px;
  display: flex;
  align-items: center;
  justify-content: center;
  gap: 2px;
  border-right: 1px solid #6a6a6a;
  background: ${props => (props.$active ? 'linear-gradient(#dbeef4, #8fc7d6)' : 'linear-gradient(#c4c4c4, #9c9c9c)')};
`;

const StatusGap = styled.div`
  width: 17px;
`;

const Taskbar = styled.div`
  display: flex;
  align-items: center;
  gap: 2px;
  height: 43px;
  padding: 2px 4px 0 2px;
  border-top: 1px solid #fff;
  background: #d4d0c8;
`;

const raised = css`
  border: 1px solid;
  border-color: #fff #555 #555 #fff;
  box-shadow: inset -1px -1px #9b978f;
`;

const StartButton = styled.button`
  width: 46px;
  height: 37px;
  margin-right: 6px;
  display: flex;
  align-items: center;
  gap: 1px;
  ${raised}

  svg {
    margin-left: 1px;
  }

  span {
    height: 31px;
    border: 1px dotted #222;
    line-height: 29px;
    white-space: nowrap;
  }
`;

const TaskButton = styled.button`
  width: 47px;
  height: 37px;
  display: flex;
  align-items: center;
  justify-content: center;
  ${raised}

  ${props => props.$stacked && css`
    box-shadow: inset -1px 0 #9b978f, inset -3px 0 #fff, inset -4px 0 #555, inset 0 -1px #9b978f;
  `}

  ${props => props.$pressed && css`
    background: #fff;
    border-color: #444 #fff #fff #444;
    box-shadow: inset 1px 1px #888;
  `}
`;

const TrayLine = styled.div`
  width: 2px;
  height: 22px;
  margin: 0 13px 0 4px;
  border-left: 1px solid #999;
  background: #fff;
`;

const Temperature = styled.div`
  width: 46px;
  margin: 0 13px 0 22px;
  text-align: center;
  font: 12px/13px "Liberation Serif", "Noto Sans CJK SC", serif;
  color: #fff;
  white-space: nowrap;
`;

const Tray = styled.div`
  display: flex;
  align-items: center;
  gap: 7px;
  height: 37px;
  padding: 0 0 0 4px;
  border: 1px solid;
  border-color: #8b8880 #fff #fff #8b8880;
`;

const Clock = styled.div`
  width: 66px;
  padding-left: 4px;
  text-align: center;
  font: 10px/15px "Liberation Mono", "Noto Sans CJK SC", monospace;
  color: #000;
  white-space: nowrap;

  b {
    font-weight: normal;
    font-size: 12px;
  }
`;

const Watermark = styled.div`
  position: absolute;
  right: 54px;
  bottom: 21px;
  z-index: 10;
  pointer-events: none;
  color: rgba(255, 255, 255, 0.75);
`;

const Brand = styled.div`
  display: flex;
  align-items: flex-end;
  font: bold 39px/36px "Liberation Sans", "Noto Sans CJK SC", sans-serif;
  text-shadow: 0 0 1px #aaa;

  span:last-child {
    font-size: 30px;
  }
`;

const Site = styled.div`
  font: 21px/26px "Open Sans", sans-serif;
`;

export default App;
